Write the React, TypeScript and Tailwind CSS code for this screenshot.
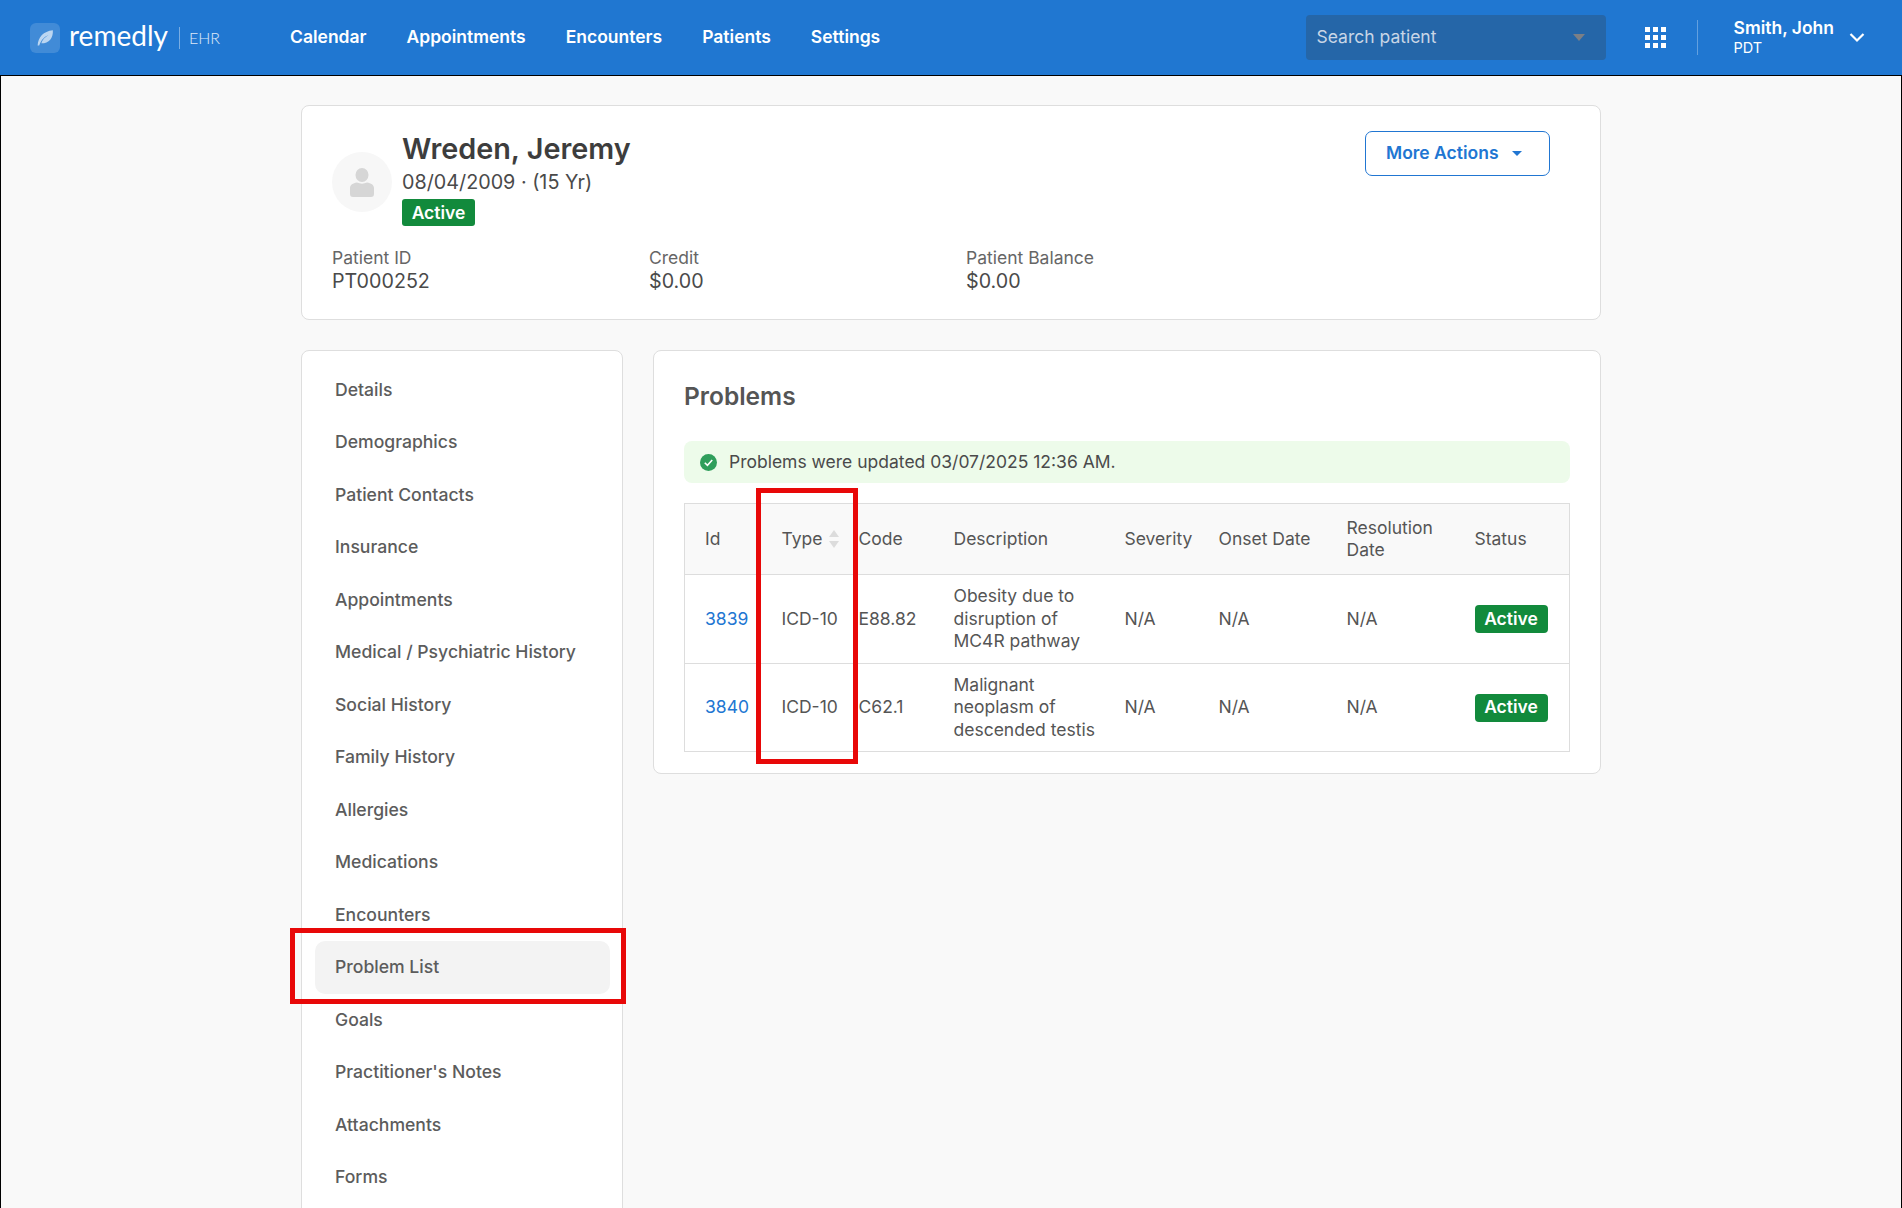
const navLinks = ['Calendar', 'Appointments', 'Encounters', 'Patients', 'Settings'];

const sideLinks = [
  'Details',
  'Demographics',
  'Patient Contacts',
  'Insurance',
  'Appointments',
  'Medical / Psychiatric History',
  'Social History',
  'Family History',
  'Allergies',
  'Medications',
  'Encounters',
  'Problem List',
  'Goals',
  "Practitioner's Notes",
  'Attachments',
  'Forms',
];

const problems = [
  { id: '3839', code: 'E88.82', description: 'Obesity due to disruption of MC4R pathway' },
  { id: '3840', code: 'C62.1', description: 'Malignant neoplasm of descended testis' },
];

function ActiveBadge() {
  return (
    <span className="inline-flex h-[28px] w-[73px] items-center justify-center rounded-[4px] bg-[#128a3c] text-[17.500px] font-semibold text-white">
      Active
    </span>
  );
}

function Header() {
  return (
    <header className="flex h-[75px] items-center bg-[#2077d1] pl-[30px] pr-[37px] text-white">
      <div className="flex items-center">
        <div className="flex h-[30px] w-[30px] items-center justify-center rounded-[6px] bg-white/15">
          <svg viewBox="0 0 20 20" className="h-[21px] w-[21px]">
            <path d="M2.500 17.500C3 9.500 8 4 17 3c.5 7.500-3.500 12.500-11 12.500 1-3.500 3.500-6 7-8-4 1.500-7 4.500-9 10z" fill="#ffffff" fillOpacity="0.65" />
          </svg>
        </div>
        <span className="ml-[9px] -mt-[6px] font-['Lato',sans-serif] text-[28px] leading-none text-white">remedly</span>
        <span className="ml-[11px] h-[22px] w-px bg-white/40" />
        <span className="ml-[9px] font-['Lato',sans-serif] text-[16px] font-light text-white/85">EHR</span>
      </div>
      <nav className="ml-[70px] flex gap-[40px] text-[17.500px] font-semibold">
        {navLinks.map((link) => (
          <span key={link}>{link}</span>
        ))}
      </nav>
      <div className="ml-auto flex h-[45px] w-[300px] items-center justify-between rounded-[4px] bg-[#2566a8] pl-[11px] pr-[21px] text-[17.500px] text-[#c9d6e6]">
        <span>Search patient</span>
        <svg viewBox="0 0 12 7" className="h-[7px] w-[12px]">
          <path d="M0 0h12L6 7z" fill="#7b7f86" />
        </svg>
      </div>
      <div className="ml-[39px] grid grid-cols-3 gap-[3px]">
        {Array.from({ length: 9 }).map((_, i) => (
          <span key={i} className="h-[5px] w-[5px] bg-white" />
        ))}
      </div>
      <span className="ml-[31px] h-[35px] w-px bg-white/30" />
      <div className="ml-[36px] flex flex-col">
        <span className="text-[17.500px] leading-[20px] font-semibold">Smith, John</span>
        <span className="text-[14.500px] leading-[20px]">PDT</span>
      </div>
      <svg viewBox="0 0 16 11" fill="none" className="ml-[15px] h-[11px] w-[16px]">
        <path d="M1.500 2 8 8.500 14.500 2" stroke="#ffffff" strokeWidth="2.200" />
      </svg>
    </header>
  );
}

function PatientCard() {
  return (
    <section className="relative h-[215px] rounded-[8px] border border-[#dedede] bg-white pl-[30px]">
      <div className="flex pt-[25px]">
        <div className="mt-[21px] flex h-[60px] w-[60px] items-center justify-center rounded-full bg-[#f7f7f7]">
          <svg viewBox="0 0 24 29" className="h-[29px] w-[24px]">
            <ellipse cx="12" cy="7" rx="6.500" ry="7" fill="#d6d6d6" />
            <path d="M0 20c0-3 3-5 7-5.500 3 1.500 7 1.500 10 0 4 .5 7 2.500 7 5.500v6c0 2-1 3-3 3H3c-2 0-3-1-3-3z" fill="#d6d6d6" />
          </svg>
        </div>
        <div className="ml-[10px]">
          <h1 className="text-[28.800px] leading-[36px] font-semibold text-[#3d3d3d]">Wreden, Jeremy</h1>
          <p className="text-[19.750px] leading-[30px] text-[#4a4a4a]">08/04/2009 · (15 Yr)</p>
          <div className="mt-[2px] flex">
            <span className="inline-flex h-[27px] w-[73px] items-center justify-center rounded-[3px] bg-[#128a3c] pt-[2px] text-[17.500px] font-semibold text-white">
              Active
            </span>
          </div>
        </div>
      </div>
      <div className="mt-[20px] grid w-[951px] grid-cols-3 text-[#4a4a4a]">
        <div>
          <div className="text-[17.500px] leading-[23px] text-[#666666]">Patient ID</div>
          <div className="text-[19.700px] leading-[24px]">PT000252</div>
        </div>
        <div>
          <div className="text-[17.500px] leading-[23px] text-[#666666]">Credit</div>
          <div className="text-[19.700px] leading-[24px]">$0.00</div>
        </div>
        <div>
          <div className="text-[17.500px] leading-[23px] text-[#666666]">Patient Balance</div>
          <div className="text-[19.700px] leading-[24px]">$0.00</div>
        </div>
      </div>
      <button className="absolute right-[50px] top-[25px] flex h-[45px] w-[185px] items-center rounded-[7px] border border-[#2176d2] bg-white pl-[20px] text-[17.500px] font-semibold text-[#2176d2]">
        More Actions
        <svg viewBox="0 0 10 5" className="ml-[13px] h-[5px] w-[10px]">
          <path d="M0 0h10L5 5z" fill="#2176d2" />
        </svg>
      </button>
    </section>
  );
}

function Sidebar() {
  return (
    <aside className="h-[900px] w-[322px] shrink-0 rounded-[8px] border border-[#dedede] bg-white pl-[13px] pr-[12px] pt-[12.500px]">
      {sideLinks.map((link) => (
        <div
          key={link}
          className={`relative flex h-[52.500px] items-center rounded-[10px] px-[20px] text-[17.600px] font-medium text-[#5c5c5c] ${
            link === 'Problem List' ? 'bg-[#f3f3f3]' : ''
          }`}
        >
          {link}
          {link === 'Problem List' && (
            <span className="absolute -bottom-[10px] -left-[25px] -right-[16px] -top-[13px] border-[5px] border-[#e80808]" />
          )}
        </div>
      ))}
    </aside>
  );
}

function SortIcon() {
  return (
    <svg viewBox="0 0 12 18" className="ml-[6px] h-[18px] w-[12px]">
      <path d="M6 0l5 7H1z" fill="#dcdcdc" />
      <path d="M6 18l-5-7h10z" fill="#dcdcdc" />
    </svg>
  );
}

function ProblemsPanel() {
  const th = 'h-[71px] pl-[20px] text-left text-[17.500px] leading-[22px] font-normal';
  const td = 'pl-[20px] text-[17.500px] leading-[22.400px]';
  return (
    <section className="h-[424px] min-w-0 flex-1 rounded-[8px] border border-[#dedede] bg-white px-[30px]">
      <h2 className="pt-[27px] text-[24.500px] leading-[36px] font-semibold text-[#555555]">Problems</h2>
      <div className="mt-[27px] flex h-[42px] items-center rounded-[8px] bg-[#edfbea] pl-[16px] text-[17.500px] text-[#4a4a4a]">
        <svg viewBox="0 0 16 16" className="mr-[12px] h-[17px] w-[17px]">
          <circle cx="8" cy="8" r="8" fill="#2f9e5b" />
          <path d="M4.500 8.200l2.500 2.500 4.500-5" fill="none" stroke="#ffffff" strokeWidth="1.500" />
        </svg>
        Problems were updated 03/07/2025 12:36 AM.
      </div>
      <div className="relative mt-[20px]">
        <table className="w-full table-fixed border-collapse border border-[#dddddd] text-[#555555]">
          <colgroup>
            <col className="w-[77px]" />
            <col className="w-[97px]" />
            <col className="w-[75px]" />
            <col className="w-[171px]" />
            <col className="w-[94px]" />
            <col className="w-[128px]" />
            <col className="w-[128px]" />
            <col />
          </colgroup>
          <thead className="bg-[#f9f9f9]">
            <tr className="border-b border-[#dddddd]">
              <th className={th}>Id</th>
              <th className={th}>
                <span className="flex items-center">
                  Type
                  <SortIcon />
                </span>
              </th>
              <th className="h-[71px] text-left text-[17.500px] leading-[22px] font-normal">Code</th>
              <th className={th}>Description</th>
              <th className={th}>Severity</th>
              <th className={th}>Onset Date</th>
              <th className={th}>
                Resolution
                <br />
                Date
              </th>
              <th className={th}>Status</th>
            </tr>
          </thead>
          <tbody>
            {problems.map((problem) => (
              <tr key={problem.id} className="h-[89px] border-b border-[#dddddd] last:h-[88px]">
                <td className={`${td} text-[#2176d2]`}>{problem.id}</td>
                <td className={td}>ICD-10</td>
                <td className="text-[17.500px] leading-[22.400px]">{problem.code}</td>
                <td className={td}>{problem.description}</td>
                <td className={td}>N/A</td>
                <td className={td}>N/A</td>
                <td className={td}>N/A</td>
                <td className={td}>
                  <div className="flex">
                    <ActiveBadge />
                  </div>
                </td>
              </tr>
            ))}
          </tbody>
        </table>
        <span className="absolute -top-[15px] left-[72px] h-[276px] w-[102px] border-[5px] border-[#e80808]" />
      </div>
    </section>
  );
}

export default function App() {
  return (
    <div className="flex h-[1208px] flex-col overflow-hidden bg-[#f9f9f9] font-['Inter',sans-serif]">
      <Header />
      <main className="min-h-0 flex-1 border-x border-t border-black">
        <div className="mx-auto w-[1300px] pt-[29px]">
          <PatientCard />
          <div className="mt-[30px] flex items-start gap-[30px]">
            <Sidebar />
            <ProblemsPanel />
          </div>
        </div>
      </main>
    </div>
  );
}
